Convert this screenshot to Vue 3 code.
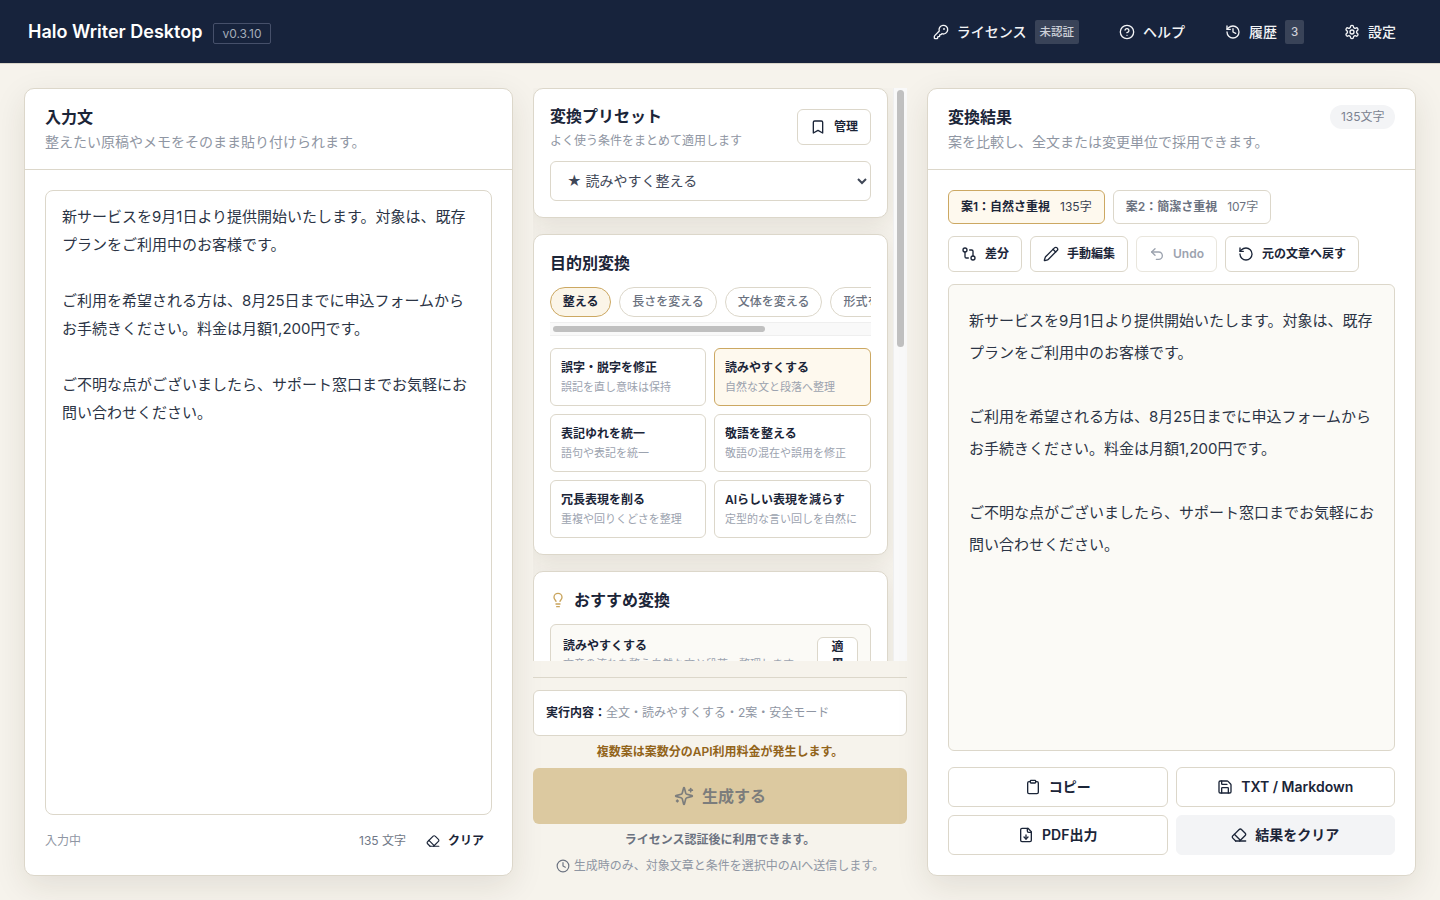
<template>
  <div class="app">
    <header class="topbar">
      <div class="brand">
        <span class="brand-name">Halo Writer Desktop</span>
        <span class="version">v0.3.10</span>
      </div>
      <nav class="nav">
        <button class="nav-btn">
          <svg class="ico" viewBox="0 0 24 24"><path d="M2.586 17.414A2 2 0 0 0 2 18.828V21a1 1 0 0 0 1 1h3a1 1 0 0 0 1-1v-1a1 1 0 0 1 1-1h1a1 1 0 0 0 1-1v-1a1 1 0 0 1 1-1h.172a2 2 0 0 0 1.414-.586l.814-.814a6.5 6.5 0 1 0-4-4z"/><circle cx="16.5" cy="7.5" r=".5"/></svg>
          ライセンス
          <span class="nav-badge">未認証</span>
        </button>
        <button class="nav-btn">
          <svg class="ico" viewBox="0 0 24 24"><circle cx="12" cy="12" r="10"/><path d="M9.09 9a3 3 0 0 1 5.83 1c0 2-3 3-3 3"/><path d="M12 17h.01"/></svg>
          ヘルプ
        </button>
        <button class="nav-btn">
          <svg class="ico" viewBox="0 0 24 24"><path d="M3 12a9 9 0 1 0 9-9 9.75 9.75 0 0 0-6.74 2.74L3 8"/><path d="M3 3v5h5"/><path d="M12 7v5l4 2"/></svg>
          履歴
          <span class="nav-badge num">3</span>
        </button>
        <button class="nav-btn">
          <svg class="ico" viewBox="0 0 24 24"><path d="M12.22 2h-.44a2 2 0 0 0-2 2v.18a2 2 0 0 1-1 1.73l-.43.25a2 2 0 0 1-2 0l-.15-.08a2 2 0 0 0-2.73.73l-.22.38a2 2 0 0 0 .73 2.73l.15.1a2 2 0 0 1 1 1.72v.51a2 2 0 0 1-1 1.74l-.15.09a2 2 0 0 0-.73 2.73l.22.38a2 2 0 0 0 2.73.73l.15-.08a2 2 0 0 1 2 0l.43.25a2 2 0 0 1 1 1.73V20a2 2 0 0 0 2 2h.44a2 2 0 0 0 2-2v-.18a2 2 0 0 1 1-1.73l.43-.25a2 2 0 0 1 2 0l.15.08a2 2 0 0 0 2.73-.73l.22-.39a2 2 0 0 0-.73-2.73l-.15-.08a2 2 0 0 1-1-1.74v-.5a2 2 0 0 1 1-1.74l.15-.09a2 2 0 0 0 .73-2.73l-.22-.38a2 2 0 0 0-2.73-.73l-.15.08a2 2 0 0 1-2 0l-.43-.25a2 2 0 0 1-1-1.73V4a2 2 0 0 0-2-2z"/><circle cx="12" cy="12" r="3"/></svg>
          設定
        </button>
      </nav>
    </header>

    <main class="layout">
      <!-- 入力 -->
      <section class="panel">
        <div class="panel-head">
          <div>
            <h2>入力文</h2>
            <p>整えたい原稿やメモをそのまま貼り付けられます。</p>
          </div>
        </div>
        <div class="panel-body">
          <textarea class="source" v-model="source"></textarea>
          <div class="input-foot">
            <span class="state">入力中</span>
            <span class="count">135 文字</span>
            <button class="clear-btn">
              <svg class="ico" viewBox="0 0 24 24"><path d="m7 21-4.3-4.3c-1-1-1-2.5 0-3.4l9.6-9.6c1-1 2.5-1 3.4 0l5.6 5.6c1 1 1 2.5 0 3.4L13 21"/><path d="M22 21H7"/><path d="m5 11 9 9"/></svg>
              クリア
            </button>
          </div>
        </div>
      </section>

      <!-- 条件 -->
      <section class="middle">
        <div class="scroll-wrap">
          <div class="scroller">
            <div class="card">
              <div class="preset-head">
                <div>
                  <h3>変換プリセット</h3>
                  <p>よく使う条件をまとめて適用します</p>
                </div>
                <button class="small-btn">
                  <svg class="ico" viewBox="0 0 24 24"><path d="m19 21-7-4-7 4V5a2 2 0 0 1 2-2h10a2 2 0 0 1 2 2v16z"/></svg>
                  管理
                </button>
              </div>
              <select class="preset-select">
                <option>★ 読みやすく整える</option>
                <option>ビジネス文書向け</option>
              </select>
            </div>

            <div class="card">
              <h3 class="purpose-title">目的別変換</h3>
              <div class="tabs">
                <button v-for="(t, i) in tabs" :key="t" class="tab" :class="{ on: i === 0 }">{{ t }}</button>
              </div>
              <div class="hbar"><div class="hbar-thumb"></div></div>
              <div class="actions">
                <button v-for="a in actions" :key="a.title" class="action" :class="{ on: a.on }">
                  <strong>{{ a.title }}</strong>
                  <span>{{ a.desc }}</span>
                </button>
              </div>
            </div>

            <div class="card reco">
              <h3 class="reco-title">
                <svg class="ico bulb" viewBox="0 0 24 24"><path d="M15 14c.2-1 .7-1.7 1.5-2.5 1-.9 1.5-2.2 1.5-3.5A6 6 0 0 0 6 8c0 1 .2 2.2 1.5 3.5.7.7 1.3 1.5 1.5 2.5"/><path d="M9 18h6"/><path d="M10 22h4"/></svg>
                おすすめ変換
              </h3>
              <div v-for="r in recos" :key="r.title" class="reco-item">
                <div class="reco-text">
                  <strong>{{ r.title }}</strong>
                  <span>{{ r.desc }}</span>
                </div>
                <button class="apply">適用</button>
              </div>
            </div>
          </div>
          <!-- ヘッドレスではスクロールバーが出ないので自前で描く -->
          <div class="vbar"><div class="vbar-thumb"></div></div>
        </div>

        <div class="run">
          <div class="summary"><b>実行内容：</b>全文・読みやすくする・2案・安全モード</div>
          <p class="warn">複数案は案数分のAPI利用料金が発生します。</p>
          <button class="generate" disabled>
            <svg class="ico" viewBox="0 0 24 24"><path d="M9.937 15.5A2 2 0 0 0 8.5 14.063l-6.135-1.582a.5.5 0 0 1 0-.962L8.5 9.936A2 2 0 0 0 9.937 8.5l1.582-6.135a.5.5 0 0 1 .963 0L14.063 8.5A2 2 0 0 0 15.5 9.937l6.135 1.581a.5.5 0 0 1 0 .964L15.5 14.063a2 2 0 0 0-1.437 1.437l-1.582 6.135a.5.5 0 0 1-.963 0z"/><path d="M20 3v4"/><path d="M22 5h-4"/><path d="M4 17v2"/><path d="M5 18H3"/></svg>
            生成する
          </button>
          <p class="license-note">ライセンス認証後に利用できます。</p>
          <p class="send-note">
            <svg class="ico" viewBox="0 0 24 24"><circle cx="12" cy="12" r="10"/><path d="M12 6v6l4 2"/></svg>
            生成時のみ、対象文章と条件を選択中のAIへ送信します。
          </p>
        </div>
      </section>

      <!-- 結果 -->
      <section class="panel">
        <div class="panel-head">
          <div>
            <h2>変換結果</h2>
            <p>案を比較し、全文または変更単位で採用できます。</p>
          </div>
          <span class="pill">135文字</span>
        </div>
        <div class="panel-body">
          <div class="variants">
            <button v-for="(v, i) in variants" :key="v.name" class="variant" :class="{ on: i === 0 }">
              <b>{{ v.name }}</b>{{ v.len }}
            </button>
          </div>
          <div class="tools">
            <button class="tool">
              <svg class="ico" viewBox="0 0 24 24"><circle cx="18" cy="18" r="3"/><circle cx="6" cy="6" r="3"/><path d="M13 6h3a2 2 0 0 1 2 2v7"/><path d="M11 18H8a2 2 0 0 1-2-2V9"/></svg>
              差分
            </button>
            <button class="tool">
              <svg class="ico" viewBox="0 0 24 24"><path d="M21.174 6.812a1 1 0 0 0-3.986-3.987L3.842 16.174a2 2 0 0 0-.5.83l-1.321 4.352a.5.5 0 0 0 .623.622l4.353-1.32a2 2 0 0 0 .83-.497z"/><path d="m15 5 4 4"/></svg>
              手動編集
            </button>
            <button class="tool off">
              <svg class="ico" viewBox="0 0 24 24"><path d="M9 14 4 9l5-5"/><path d="M4 9h10.5a5.5 5.5 0 0 1 5.5 5.5a5.5 5.5 0 0 1-5.5 5.5H11"/></svg>
              Undo
            </button>
            <button class="tool">
              <svg class="ico" viewBox="0 0 24 24"><path d="M3 12a9 9 0 1 0 9-9 9.75 9.75 0 0 0-6.74 2.74L3 8"/><path d="M3 3v5h5"/></svg>
              元の文章へ戻す
            </button>
          </div>
          <div class="result">
            <p v-for="(p, i) in paragraphs" :key="i">{{ p }}</p>
          </div>
          <div class="exports">
            <button class="export">
              <svg class="ico" viewBox="0 0 24 24"><rect x="8" y="2" width="8" height="4" rx="1"/><path d="M16 4h2a2 2 0 0 1 2 2v14a2 2 0 0 1-2 2H6a2 2 0 0 1-2-2V6a2 2 0 0 1 2-2h2"/></svg>
              コピー
            </button>
            <button class="export">
              <svg class="ico" viewBox="0 0 24 24"><path d="M15.2 3a2 2 0 0 1 1.4.6l3.8 3.8a2 2 0 0 1 .6 1.4V19a2 2 0 0 1-2 2H5a2 2 0 0 1-2-2V5a2 2 0 0 1 2-2z"/><path d="M17 21v-7a1 1 0 0 0-1-1H8a1 1 0 0 0-1 1v7"/><path d="M7 3v4a1 1 0 0 0 1 1h7"/></svg>
              TXT / Markdown
            </button>
            <button class="export">
              <svg class="ico" viewBox="0 0 24 24"><path d="M15 2H6a2 2 0 0 0-2 2v16a2 2 0 0 0 2 2h12a2 2 0 0 0 2-2V7Z"/><path d="M14 2v4a2 2 0 0 0 2 2h4"/><path d="M12 18v-6"/><path d="m9 15 3 3 3-3"/></svg>
              PDF出力
            </button>
            <button class="export muted">
              <svg class="ico" viewBox="0 0 24 24"><path d="m7 21-4.3-4.3c-1-1-1-2.5 0-3.4l9.6-9.6c1-1 2.5-1 3.4 0l5.6 5.6c1 1 1 2.5 0 3.4L13 21"/><path d="M22 21H7"/><path d="m5 11 9 9"/></svg>
              結果をクリア
            </button>
          </div>
        </div>
      </section>
    </main>
  </div>
</template>

<script setup>
import { ref } from 'vue'

const paragraphs = [
  '新サービスを9月1日より提供開始いたします。対象は、既存プランをご利用中のお客様です。',
  'ご利用を希望される方は、8月25日までに申込フォームからお手続きください。料金は月額1,200円です。',
  'ご不明な点がございましたら、サポート窓口までお気軽にお問い合わせください。',
]

const source = ref(paragraphs.join('\n\n'))

const tabs = ['整える', '長さを変える', '文体を変える', '形式を変える', '翻訳する']

const actions = [
  { title: '誤字・脱字を修正', desc: '誤記を直し意味は保持' },
  { title: '読みやすくする', desc: '自然な文と段落へ整理', on: true },
  { title: '表記ゆれを統一', desc: '語句や表記を統一' },
  { title: '敬語を整える', desc: '敬語の混在や誤用を修正' },
  { title: '冗長表現を削る', desc: '重複や回りくどさを整理' },
  { title: 'AIらしい表現を減らす', desc: '定型的な言い回しを自然に' },
]

const recos = [
  { title: '読みやすくする', desc: '文章の流れを整え自然な文と段落へ整理します。' },
  { title: '敬語を整える', desc: '敬語の混在や誤用を見直して丁寧に整えます。' },
  { title: '冗長表現を削る', desc: '重複や回りくどい表現を整理して短くします。' },
]

const variants = [
  { name: '案1：自然さ重視', len: '135字' },
  { name: '案2：簡潔さ重視', len: '107字' },
]
</script>

<style>
html,
body {
  margin: 0;
  height: 100%;
  overflow: hidden;
  background: #f6f3ec;
}
</style>

<style scoped>
.app {
  display: flex;
  flex-direction: column;
  height: 100vh;
  font-family: Inter, 'Noto Sans CJK JP', sans-serif;
  color: #1b2538;
  background: #f6f3ec;
}
button,
select,
textarea {
  font-family: inherit;
  line-height: 20px;
}
h2,
h3,
p {
  margin: 0;
}
.ico {
  width: 16px;
  height: 16px;
  flex: none;
  fill: none;
  stroke: currentColor;
  stroke-width: 2;
  stroke-linecap: round;
  stroke-linejoin: round;
}

/* ヘッダー */
.topbar {
  height: 63px;
  flex: none;
  display: flex;
  align-items: center;
  justify-content: space-between;
  padding: 0 28px;
  background: #17233c;
  border-bottom: 1px solid #d9d5c9;
}
.brand {
  display: flex;
  align-items: center;
  gap: 11px;
}
.brand-name {
  color: #fff;
  font-size: 18px;
  line-height: 24px;
  font-weight: 600;
}
.version {
  padding: 2px 8px;
  font-size: 12px;
  line-height: 15px;
  color: #a5acb8;
  border: 1px solid #46506a;
  border-radius: 2px;
  margin-top: 3px;
}
.nav {
  display: flex;
  align-items: center;
  gap: 8px;
}
.nav-btn {
  display: flex;
  align-items: center;
  gap: 8px;
  height: 40px;
  padding: 0 16px;
  background: transparent;
  border: 0;
  color: #f3f4f6;
  font-size: 14px;
  font-weight: 500;
}
.nav-badge {
  padding: 0 5px;
  height: 24px;
  line-height: 24px;
  font-size: 11.5px;
  color: #cdd1d8;
  background: #394358;
  border-radius: 2px;
}
.nav-badge.num {
  width: 19px;
  box-sizing: border-box;
  padding: 0;
  text-align: center;
}

/* 3カラム */
.layout {
  flex: 1;
  min-height: 0;
  display: grid;
  grid-template-columns: 1fr 374px 1fr;
  gap: 20px;
  padding: 24px;
}
.panel {
  display: flex;
  flex-direction: column;
  min-height: 0;
  background: #fff;
  border: 1px solid #dcd7ca;
  border-radius: 10px;
  box-shadow: 0 10px 32px rgba(45, 35, 15, 0.1);
}
.panel-head {
  display: flex;
  justify-content: space-between;
  align-items: flex-start;
  height: 81px;
  box-sizing: border-box;
  padding: 16px 20px 0;
  border-bottom: 1px solid #dcd7ca;
}
.panel-head h2 {
  font-size: 16px;
  font-weight: 600;
  line-height: 24px;
}
.panel-head p {
  margin-top: 2px;
  font-size: 14px;
  line-height: 22px;
  color: #8f96a3;
}
.pill {
  padding: 0 10.5px;
  height: 24px;
  line-height: 24px;
  font-size: 12px;
  color: #7b8290;
  background: #f3f4f6;
  border-radius: 12px;
}
.panel-body {
  flex: 1;
  min-height: 0;
  display: flex;
  flex-direction: column;
  padding: 20px;
}

/* 入力 */
.source {
  flex: 1;
  min-height: 0;
  resize: none;
  outline: none;
  padding: 12px 16px;
  font-size: 15px;
  line-height: 28px;
  color: #2b3445;
  background: #fff;
  border: 1px solid #dcd7ca;
  border-radius: 8px;
}
.input-foot {
  display: flex;
  align-items: center;
  height: 28px;
  margin-top: 12px;
  font-size: 12px;
  line-height: 16px;
  color: #8f96a3;
}
.state {
  flex: 1;
}
.count {
  color: #6f7786;
}
.clear-btn {
  display: flex;
  align-items: center;
  gap: 8px;
  height: 28px;
  margin-left: 12px;
  padding: 0 8px;
  background: transparent;
  border: 0;
  font-size: 12px;
  font-weight: 600;
  color: #1b2538;
}
.clear-btn .ico {
  width: 14px;
  height: 14px;
}

/* 中央 */
.middle {
  display: flex;
  flex-direction: column;
  min-height: 0;
}
.scroll-wrap {
  flex: 1;
  min-height: 0;
  display: flex;
}
.scroller {
  flex: 1;
  min-width: 0;
  display: flex;
  flex-direction: column;
  gap: 16px;
  overflow-x: hidden;
  overflow-y: auto;
  padding-right: 5px;
}
.vbar {
  flex: none;
  width: 14px;
  box-sizing: border-box;
  padding: 2px 3px;
  background: #f9f9f9;
  border-left: 1px solid #efefef;
}
.vbar-thumb {
  height: 257px;
  background: #c0c0c0;
  border-radius: 4px;
}
.hbar {
  height: 14px;
  box-sizing: border-box;
  margin-top: 5px;
  padding: 3px;
  background: #f9f9f9;
  border-top: 1px solid #efefef;
  border-bottom: 1px solid #efefef;
}
.hbar-thumb {
  width: 212px;
  height: 100%;
  background: #c0c0c0;
  border-radius: 4px;
}
.card {
  flex: none;
  padding: 16px;
  background: #fff;
  border: 1px solid #dcd7ca;
  border-radius: 10px;
  box-shadow: 0 8px 24px rgba(45, 35, 15, 0.09);
}
.card h3 {
  font-size: 16px;
  font-weight: 600;
  line-height: 22px;
}
.preset-head {
  display: flex;
  align-items: flex-start;
  justify-content: space-between;
}
.preset-head p {
  margin-top: 4px;
  font-size: 12px;
  line-height: 20px;
  color: #8f96a3;
}
.small-btn {
  display: flex;
  align-items: center;
  gap: 8px;
  height: 36px;
  margin-top: 4px;
  padding: 0 12px;
  background: #fff;
  border: 1px solid #dcd7ca;
  border-radius: 6px;
  font-size: 12px;
  font-weight: 600;
  color: #1b2538;
}
.preset-select {
  display: block;
  width: 100%;
  height: 40px;
  margin-top: 10px;
  padding: 0 12px 2px;
  font-size: 14px;
  color: #3f4757;
  background: #fff;
  border: 1px solid #dcd7ca;
  border-radius: 6px;
}
.purpose-title {
  margin-top: 1px;
}
.tabs {
  display: flex;
  gap: 8px;
  margin-top: 13px;
  overflow-x: auto;
}
.tab {
  flex: none;
  height: 30px;
  padding: 0 12px;
  font-size: 12px;
  font-weight: 500;
  color: #6b7280;
  background: #fff;
  border: 1px solid #dcd7ca;
  border-radius: 15px;
}
.tab.on {
  padding: 0 11.75px;
  font-weight: 600;
  color: #1b2538;
  background: #fbf5e8;
  border-color: #cca862;
}
.actions {
  display: grid;
  grid-template-columns: 156px 1fr;
  gap: 8px;
  margin-top: 12px;
}
.action {
  display: flex;
  flex-direction: column;
  gap: 1px;
  height: 58px;
  padding: 10px 10px 0;
  text-align: left;
  background: #fff;
  border: 1px solid #dcd7ca;
  border-radius: 6px;
}
.action strong {
  font-size: 12px;
  line-height: 18px;
  font-weight: 600;
  color: #1b2538;
}
.action span {
  font-size: 11px;
  line-height: 18px;
  color: #9ca3af;
}
.action.on {
  background: #fef9ee;
  border-color: #cca862;
}
.reco-title {
  display: flex;
  align-items: center;
  gap: 8px;
  margin: 1px 0 13px;
}
.bulb {
  color: #c9a45c;
}
.reco-item {
  display: flex;
  justify-content: space-between;
  gap: 12px;
  margin-bottom: 8px;
  padding: 12px;
  background: #fbfaf6;
  border: 1px solid #dcd7ca;
  border-radius: 6px;
}
.reco-text {
  flex: 1;
  min-width: 0;
}
.reco-text strong {
  display: block;
  font-size: 12px;
  line-height: 18px;
  font-weight: 600;
}
.reco-text span {
  display: block;
  font-size: 11px;
  line-height: 18px;
  color: #9ca3af;
}
.apply {
  flex: none;
  width: 41px;
  padding: 0 12px;
  font-size: 12px;
  line-height: 17px;
  font-weight: 600;
  color: #1b2538;
  background: #fff;
  border: 1px solid #dcd7ca;
  border-radius: 6px;
  align-self: flex-start;
}

/* 実行エリア */
.run {
  flex: none;
  margin-top: 16px;
  padding-top: 12px;
  padding-bottom: 2px;
  border-top: 1px solid #dcd7ca;
  text-align: center;
}
.summary {
  height: 46px;
  box-sizing: border-box;
  line-height: 44px;
  padding: 0 12px;
  text-align: left;
  font-size: 12px;
  color: #8f96a3;
  background: #fff;
  border: 1px solid #dcd7ca;
  border-radius: 6px;
}
.summary b {
  font-weight: 600;
  color: #1b2538;
}
.warn {
  margin: 8px 0;
  font-size: 12px;
  line-height: 16px;
  font-weight: 600;
  color: #92641a;
}
.generate {
  display: flex;
  align-items: center;
  justify-content: center;
  gap: 8px;
  width: 100%;
  height: 56px;
  font-size: 16px;
  font-weight: 600;
  color: #7c7d7c;
  background: #dcc9a0;
  border: 0;
  border-radius: 6px;
}
.generate .ico {
  width: 20px;
  height: 20px;
}
.license-note {
  margin-top: 8px;
  font-size: 12px;
  line-height: 16px;
  font-weight: 600;
  color: #6b7280;
}
.send-note {
  display: flex;
  align-items: center;
  justify-content: center;
  gap: 4px;
  margin-top: 10px;
  font-size: 12px;
  line-height: 16px;
  color: #8f96a3;
}
.send-note .ico {
  width: 14px;
  height: 14px;
  color: #6b7280;
}

/* 結果 */
.variants {
  display: flex;
  gap: 8px;
}
.variant {
  height: 34px;
  padding: 0 12px;
  font-size: 12px;
  color: #6b7280;
  background: #fff;
  border: 1px solid #dcd7ca;
  border-radius: 6px;
}
.variant b {
  font-weight: 600;
  margin-right: 10px;
}
.variant.on {
  color: #374151;
  background: #fef9ee;
  border-color: #cca862;
}
.variant.on b {
  color: #1b2538;
}
.tools {
  display: flex;
  gap: 8px;
  margin-top: 12px;
}
.tool {
  display: flex;
  align-items: center;
  gap: 8px;
  height: 36px;
  padding: 0 12px;
  font-size: 12px;
  font-weight: 600;
  color: #1b2538;
  background: #fff;
  border: 1px solid #dcd7ca;
  border-radius: 6px;
}
.tool.off {
  color: #9ca3af;
  border-color: #e9e6dd;
}
.result {
  flex: 1;
  min-height: 0;
  margin-top: 12px;
  padding: 20px;
  font-size: 15px;
  line-height: 32px;
  color: #2b3445;
  background: #fbfaf6;
  border: 1px solid #dcd7ca;
  border-radius: 6px;
}
.result p + p {
  margin-top: 32px;
}
.exports {
  display: grid;
  grid-template-columns: 1fr 1fr;
  gap: 8px;
  margin-top: 16px;
}
.export {
  display: flex;
  align-items: center;
  justify-content: center;
  gap: 8px;
  height: 40px;
  font-size: 14px;
  font-weight: 600;
  color: #1b2538;
  background: #fff;
  border: 1px solid #dcd7ca;
  border-radius: 6px;
}
.export.muted {
  background: #f3f4f6;
  border-color: #f3f4f6;
}
</style>
